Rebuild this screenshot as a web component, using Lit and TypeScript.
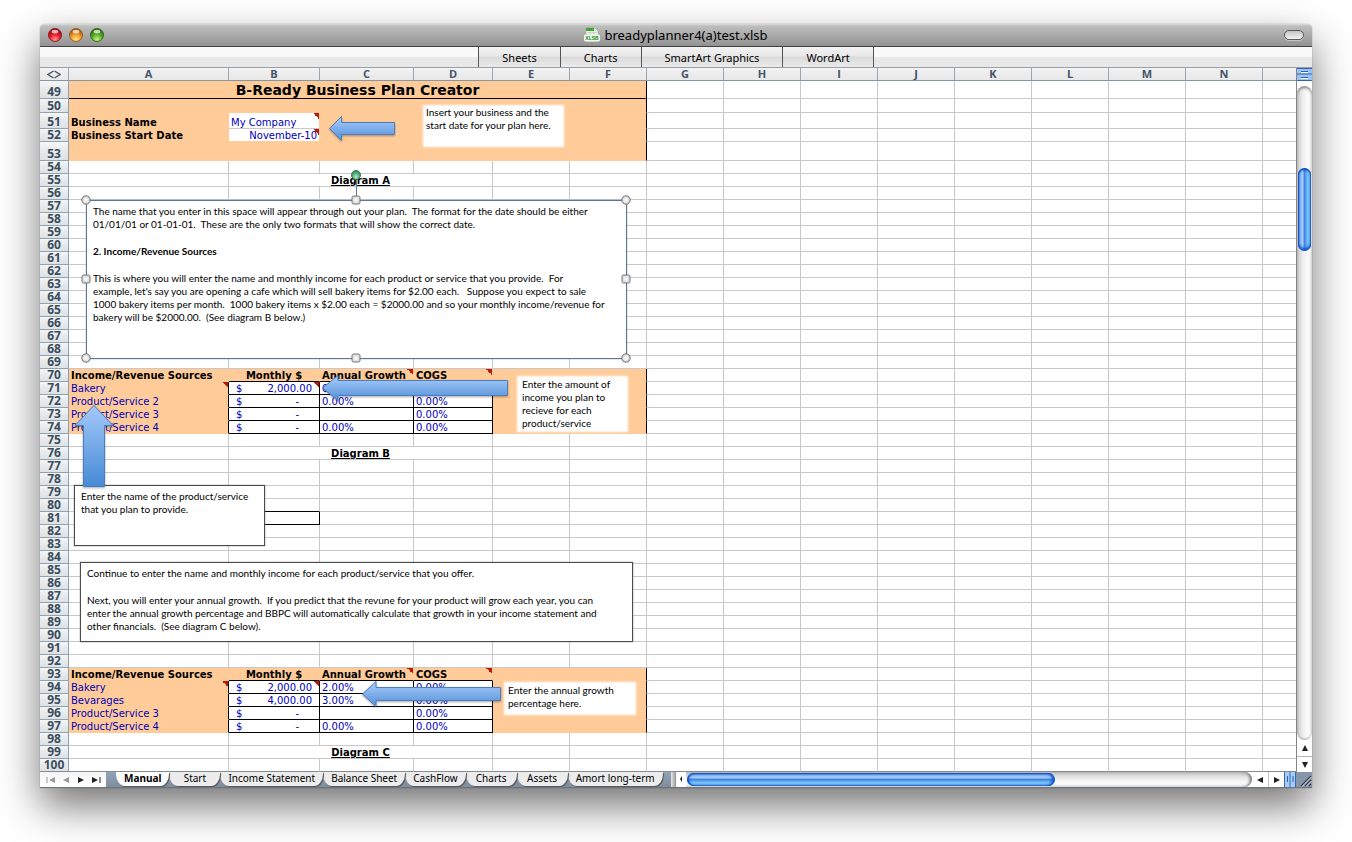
import { LitElement, html, svg, css, nothing } from 'lit';
import { customElement, state } from 'lit/decorators.js';
import { classMap } from 'lit/directives/class-map.js';

type Cell = { text?: string; cls?: string; span?: number; money?: string };

const COLUMNS = ['A', 'B', 'C', 'D', 'E', 'F', 'G', 'H', 'I', 'J', 'K', 'L', 'M', 'N', ''];
const FIRST_ROW = 49;
const LAST_ROW = 100;
const TABS = ['Manual', 'Start', 'Income Statement', 'Balance Sheet', 'CashFlow', 'Charts', 'Assets', 'Amort long-term'];

const CELLS: Record<string, Cell> = {
  A49: { text: 'B-Ready Business Plan Creator', cls: 'title edge', span: 6 },
  A51: { text: 'Business Name', cls: 'bold' },
  B51: { text: 'My Company', cls: 'field blue mark' },
  A52: { text: 'Business Start Date', cls: 'bold' },
  B52: { text: 'November-10', cls: 'field blue mark right' },
  B55: { text: 'Diagram A', cls: 'caption', span: 3 },
  B76: { text: 'Diagram B', cls: 'caption', span: 3 },
  B80: { cls: 'under' },
  B81: { cls: 'under side' },
  B99: { text: 'Diagram C', cls: 'caption', span: 3 },
};

function addSources(top: number, rows: [string, string, string, string][]) {
  CELLS[`A${top}`] = { text: 'Income/Revenue Sources', cls: 'bold' };
  CELLS[`B${top}`] = { text: 'Monthly $', cls: 'bold center under' };
  CELLS[`C${top}`] = { text: 'Annual Growth', cls: 'bold under mark' };
  CELLS[`D${top}`] = { text: 'COGS', cls: 'bold under mark' };
  rows.forEach(([name, money, growth, cogs], i) => {
    const r = top + 1 + i;
    const mark = i === 0 ? ' mark' : '';
    CELLS[`A${r}`] = { text: name, cls: 'blue side' + mark };
    CELLS[`B${r}`] = { money, cls: 'boxed blue' + mark };
    CELLS[`C${r}`] = { text: growth, cls: 'boxed blue' };
    CELLS[`D${r}`] = { text: cogs, cls: 'boxed blue' };
  });
}
addSources(70, [
  ['Bakery', '2,000.00', '0.00%', '0.00%'],
  ['Product/Service 2', '-', '0.00%', '0.00%'],
  ['Product/Service 3', '-', '', '0.00%'],
  ['Product/Service 4', '-', '0.00%', '0.00%'],
]);
addSources(93, [
  ['Bakery', '2,000.00', '2.00%', '0.00%'],
  ['Bevarages', '4,000.00', '3.00%', '0.00%'],
  ['Product/Service 3', '-', '', '0.00%'],
  ['Product/Service 4', '-', '0.00%', '0.00%'],
]);

const isShaded = (row: number) => row <= 53 || (row >= 70 && row <= 74) || (row >= 93 && row <= 97);

@customElement('sheet-grid')
class SheetGrid extends LitElement {
  static styles = css`
    :host { display: block; position: relative; overflow: hidden; background: #fff; }
    table { width: 100%; table-layout: fixed; border-collapse: separate; border-spacing: 0; font: 10px/10px "DejaVu Sans", Verdana, sans-serif; color: #000; }
    .c-head { width: 29px; } .c-A { width: 160px; } .c-B { width: 91px; } .c-C { width: 94px; } .c-D { width: 79px; }
    .c-std { width: 77px; }
    th, td { box-sizing: border-box; height: 13px; padding: 0; vertical-align: bottom; white-space: nowrap; }
    thead th, tbody th { font: bold 11px/12px "Open Sans", sans-serif; color: #44546a; text-align: center; }
    thead th { background: linear-gradient(#f4f4f4, #ececec 50%, #e9e9e9); border-right: 1px solid #98a6b2; border-bottom: 1px solid #8796a3; }
    thead th:last-child { border-right: 0; }
    tbody th { font-size: 12px; color: #3d4d5c; background: linear-gradient(#f4f6f7, #e9ecee 40%, #dde2e6); border-right: 1px solid #8da0ae; border-bottom: 1px solid #92a3b0; }
    td { padding: 0 2px; border-right: 1px solid #c8c8c8; border-bottom: 1px solid #c8c8c8; background-color: #fff; }
    td:last-child { border-right: 0; }
    tbody tr:last-child td, tbody tr:last-child th { border-bottom-color: #858b90; }
    .r49 > * { height: 18px; } .r50 > * { height: 14px; } .r51 > * { height: 16px; } .r53 > * { height: 19px; }
    .shade { background-color: #ffcc99; border-color: #ffcc99; }
    .edge { border-right-color: #000; }
    .title { font: bold 14px/16px "DejaVu Sans", sans-serif; text-align: center; border-bottom-color: #000; }
    .bold { font-weight: bold; }
    .center { text-align: center; }
    .right { text-align: right; }
    .caption { font-weight: bold; text-align: center; text-decoration: underline; text-underline-offset: 1px; }
    .blue { color: #0000b8; }
    .field { background-color: #fff; }
    .r51 .field { border-bottom-color: #c8c8c8; }
    .under { border-bottom-color: #000; }
    .side { border-right-color: #000; }
    .boxed { background-color: #fff; border-color: #000; }
    .mark { background-image: linear-gradient(to bottom left, #c01808 50%, transparent 50%); background-size: 6px 6px; background-position: right top; background-repeat: no-repeat; }
    .money { display: flex; justify-content: space-between; padding: 0 5px; }
    .money .dash { padding-right: 13px; }
    .corner { display: block; margin: 0 auto; }

    .layer { position: absolute; inset: 0; pointer-events: none; }
    .obj { position: absolute; box-sizing: border-box; font: 10px/13px Lato, Calibri, sans-serif; color: #000; }
    .obj p { margin: 0 0 14px; white-space: pre; }
    .note { background: #fff; box-shadow: 0 0 2px 1px #fff; padding: 1px 4px; }
    .box { background: #fff; border: 1px solid #4c4c4c; box-shadow: 0 0 1px #555; padding: 4px 6px; }
    .selected { border-color: #60788f; box-shadow: 0 0 1px #5b83b5; }
    .art { position: absolute; overflow: visible; filter: drop-shadow(0 1px 1px rgba(0, 0, 0, .35)); }
    .handles { position: absolute; overflow: visible; }
    .n1 { left: 384px; top: 38px; width: 139px; height: 40px; padding-left: 2px; padding-top: 0; }
    .n2 { left: 478px; top: 309px; width: 109px; height: 54px; }
    .n3 { left: 465px; top: 615px; width: 130px; height: 31px; padding-left: 3px; padding-top: 1px; }
    .b1 { left: 46px; top: 132px; width: 541px; height: 159px; }
    .b2 { left: 34px; top: 417px; width: 191px; height: 61px; }
    .b3 { left: 40px; top: 494px; width: 553px; height: 80px; }
    .a1 { left: 289px; top: 48px; } .a2 { left: 282px; top: 307px; } .a3 { left: 34px; top: 337px; } .a4 { left: 322px; top: 613px; }
    .h1 { left: 46px; top: 132px; }
  `;

  private cellsFor(row: number) {
    const out = [];
    for (let i = 0; i < COLUMNS.length; ) {
      const cell = CELLS[COLUMNS[i] + row] ?? {};
      const span = cell.span ?? 1;
      const shaded = isShaded(row) && i < 6;
      const cls = `${shaded ? 'shade ' : ''}${shaded && i + span === 6 ? 'edge ' : ''}${cell.cls ?? ''}`;
      out.push(html`<td class=${cls} colspan=${span}>${cell.money
        ? html`<div class="money"><span>$</span><span class=${cell.money === '-' ? 'dash' : ''}>${cell.money}</span></div>`
        : cell.text ?? nothing}</td>`);
      i += span;
    }
    return out;
  }

  private leftArrow(cls: string, w: number, h: number, head: number, inset: number) {
    const id = 'g-' + cls;
    return html`<svg class="art ${cls}" width=${w} height=${h} aria-hidden="true">
      <defs><linearGradient id=${id} x1="0" y1="0" x2="0" y2="1"><stop offset="0.15" stop-color="#9fc4f7"></stop><stop offset="0.9" stop-color="#5a96dc"></stop></linearGradient></defs>
      <path d="M0.5 ${h / 2}L${head} 0.5V${inset}H${w - 0.5}V${h - inset}H${head}V${h - 0.5}Z" fill="url(#${id})" stroke="#4a7ebb"></path>
    </svg>`;
  }

  render() {
    const rows = Array.from({ length: LAST_ROW - FIRST_ROW + 1 }, (_, i) => FIRST_ROW + i);
    const W = 540, H = 158;
    const round = [[0, 0], [W, 0], [0, H], [W, H]];
    const square = [[W / 2, 0], [W / 2, H], [0, H / 2], [W, H / 2]];
    return html`
      <table>
        <colgroup>
          <col class="c-head"><col class="c-A"><col class="c-B"><col class="c-C"><col class="c-D">
          ${Array.from({ length: 10 }, () => html`<col class="c-std">`)}<col>
        </colgroup>
        <thead><tr>
          <th aria-label="Select all"><svg class="corner" width="14" height="12" viewBox="0 0 14 12"><path d="M6.500 3L1 6.500L6.500 10M7.500 3L13 6.500L7.500 10" fill="none" stroke="#44546a" stroke-width="1.300"></path></svg></th>
          ${COLUMNS.map((c) => html`<th scope="col">${c}</th>`)}
        </tr></thead>
        <tbody>${rows.map((r) => html`<tr class="r${r}"><th scope="row">${r}</th>${this.cellsFor(r)}</tr>`)}</tbody>
      </table>
      <div class="layer">
        <div class="obj note n1"><p>Insert your business and the
start date for your plan here.</p></div>
        ${this.leftArrow('a1', 66, 25, 12.5, 6.5)}
        <div class="obj box selected b1"><p>The name that you enter in this space will appear through out your plan.  The format for the date should be either
01/01/01 or 01-01-01.  These are the only two formats that will show the correct date.</p><p><b>2. Income/Revenue Sources</b></p><p>This is where you will enter the name and monthly income for each product or service that you provide.  For
example, let's say you are opening a cafe which will sell bakery items for $2.00 each.   Suppose you expect to sale
1000 bakery items per month.  1000 bakery items x $2.00 each = $2000.00 and so your monthly income/revenue for
bakery will be $2000.00.  (See diagram B below.)</p></div>
        <svg class="handles h1" width="541" height="159" aria-hidden="true">
          <defs>
            <radialGradient id="knob"><stop offset="0" stop-color="#fff"></stop><stop offset="1" stop-color="#d4d4d4"></stop></radialGradient>
            <radialGradient id="spin" cy="0.7"><stop offset="0" stop-color="#b5efc8"></stop><stop offset="1" stop-color="#3f9a68"></stop></radialGradient>
          </defs>
          <path d="M270.500 -21V-4" stroke="#5b7c98" fill="none"></path>
          <circle cx="270" cy="-25" r="4.500" fill="url(#spin)" stroke="#3a7355"></circle>
          ${round.map(([x, y]) => svg`<circle cx=${x} cy=${y} r="4.200" fill="url(#knob)" stroke="#6e6e6e"></circle>`)}
          ${square.map(([x, y]) => svg`<rect x=${x - 4} y=${y - 4} width="8" height="8" rx="1.500" fill="url(#knob)" stroke="#777"></rect>`)}
        </svg>
        <div class="obj note n2"><p>Enter the amount of
income you plan to
recieve for each
product/service</p></div>
        ${this.leftArrow('a2', 186, 26, 16, 5.5)}
        <div class="obj box b2"><p>Enter the name of the product/service
that you plan to provide.</p></div>
        <svg class="art a3" width="40" height="82" aria-hidden="true">
          <defs><linearGradient id="up" x1="0" y1="0" x2="0" y2="1"><stop offset="0" stop-color="#a4c8fa"></stop><stop offset="1" stop-color="#468bd6"></stop></linearGradient></defs>
          <path d="M20 0.500L39 20.500H30.500V81.500H9.500V20.500H1Z" fill="url(#up)" stroke="#4a7ebb"></path>
        </svg>
        <div class="obj box b3"><p>Continue to enter the name and monthly income for each product/service that you offer.</p><p>Next, you will enter your annual growth.  If you predict that the revune for your product will grow each year, you can
enter the annual growth percentage and BBPC will automatically calculate that growth in your income statement and
other financials.  (See diagram C below).</p></div>
        <div class="obj note n3"><p>Enter the annual growth
percentage here.</p></div>
        ${this.leftArrow('a4', 139, 26, 14, 6.5)}
      </div>`;
  }
}

@customElement('app-root')
class AppRoot extends LitElement {
  @state() private active = 'Manual';

  static styles = css`
    :host { display: block; box-sizing: border-box; min-height: 100vh; padding: 24px 40px 54px; background: #fff; font-family: "Noto Sans", "Open Sans", sans-serif; }
    button { font-family: inherit; margin: 0; padding: 0; border: 0; background: none; color: #000; white-space: nowrap; }
    .window { border-radius: 5px 5px 0 0; box-shadow: 0 0 1px rgba(0, 0, 0, .6), 0 18px 40px rgba(0, 0, 0, .55); }
    .titlebar { display: grid; grid-template-columns: 1fr auto 1fr; align-items: center; box-sizing: border-box; height: 23px; padding: 0 8px; border-radius: 5px 5px 0 0; background: linear-gradient(#dcdcdc, #bebebe 2px, #939393); border-bottom: 1px solid #404040; }
    .lights { display: flex; gap: 7px; }
    .light { width: 14px; height: 14px; }
    .light svg { display: block; }
    .name { display: flex; align-items: center; gap: 4px; font-size: 13px; line-height: 20px; font-weight: normal; margin: 0; }
    .pill { justify-self: end; width: 20px; height: 10px; border: 1px solid #5a5a5a; border-radius: 5px; background: linear-gradient(#c4c4c4, #f4f4f4); box-shadow: 0 1px 0 #c8c8c8; }
    .toolbar { display: flex; justify-content: center; box-sizing: border-box; height: 21px; background: linear-gradient(#f9f9f9 10px, #e8e8e8 10px); border-bottom: 1px solid #98a0a6; }
    .toolbar button { padding: 2px 23px 0; font-size: 11px; line-height: 18px; border-right: 1px solid #555; background: linear-gradient(#f2f2f2, #e9e9e9 9px, #dadada 10px, #ebebeb); }
    .toolbar button:first-child { border-left: 1px solid #555; }
    .body { display: grid; grid-template-columns: minmax(0, 1fr) 16px; }
    .vbar { display: flex; flex-direction: column; border-left: 1px solid #858585; background: #fff; }
    .split { display: block; height: 13px; }
    .vtrack { flex: 1; display: flex; flex-direction: column; margin-top: 5px; border-radius: 8px; background: linear-gradient(to right, #c4c4c4, #ececec 35%, #fdfdfd 75%, #e4e4e4); box-shadow: inset 0 3px 3px -1px #888, inset 0 -2px 2px -1px #aaa; }
    .vthumb { margin: 82px 1px 0; height: 83px; border-radius: 7px; background: linear-gradient(to right, #0a47b8, #7fb0f4 15%, #a9ccfa 35%, #3c86e4 50%, #7cc4fb 75%, #6fb8f4 90%, #1c5cc0); box-shadow: inset 0 2px 2px #0a4dc0, inset 0 -3px 3px #1557c4; }
    .arrows { display: grid; grid-template-rows: 16px 16px; }
    .arrows button { display: grid; place-items: center; }
    .arrows button + button { border-top: 1px solid #b5b5b5; }
    .footer { display: flex; box-sizing: border-box; height: 16px; border-bottom: 1px solid #6c747c; background: #8e9db0; }
    .nav { display: flex; align-items: center; justify-content: space-around; width: 66px; padding: 0 3px; box-sizing: border-box; background: linear-gradient(#f4f4f4, #fff); }
    .nav svg, .arrows svg, .hbuttons svg { display: block; }
    .strip { display: flex; width: 565px; padding-left: 10px; box-sizing: border-box; background: linear-gradient(#93a3b8, #7f8d9d); overflow: hidden; }
    .tab { flex: none; min-width: 51px; height: 14px; padding: 0 8px; font-size: 10px; line-height: 10px; padding-bottom: 3px; background: #ececec; border-radius: 0 0 9px 9px / 0 0 12px 12px; box-shadow: 1px 1px 1px #555; position: relative; }
    .tab.active { background: #fff; font-weight: bold; }
    .hsplit { width: 8px; background: linear-gradient(to right, #e8e8e8, #999 60%, #fff 70%); }
    .htrack { flex: 1; border-radius: 0 8px 8px 0; background: linear-gradient(#bdbdbd, #e6e6e6 35%, #fcfcfc 75%, #e4e4e4); box-shadow: inset -3px 0 3px -1px #777; }
    .hwrap { flex: 1; display: flex; background: #fff; }
    .hthumb { width: 65%; height: 13px; margin: 1px 0 0 1px; border-radius: 7px; background: linear-gradient(#0a47b8, #7fb0f4 15%, #a9ccfa 35%, #3c86e4 50%, #7cc4fb 75%, #6fb8f4 90%, #1c5cc0); box-shadow: inset 2px 0 2px #0a4dc0, inset -3px 0 3px #1557c4; }
    .hbuttons { display: grid; grid-template-columns: 16px 16px; }
    .hbuttons button { display: grid; place-items: center; }
    .hbuttons button + button { border-left: 1px solid #c4c4c4; }
    .endcap { display: block; }
  `;

  private light(name: string, dark: string, mid: string, pale: string) {
    return html`<button class="light" aria-label=${name}><svg width="14" height="14" viewBox="0 0 14 14">
      <defs><radialGradient id=${name} cx="0.5" cy="0.85" r="0.8"><stop offset="0" stop-color=${pale}></stop><stop offset="0.5" stop-color=${mid}></stop><stop offset="1" stop-color=${dark}></stop></radialGradient></defs>
      <circle cx="7" cy="7" r="6.500" fill="url(#${name})" stroke=${dark} stroke-width="0.900"></circle>
      <ellipse cx="7" cy="3.600" rx="3.300" ry="1.900" fill="#fff" opacity="0.700"></ellipse>
    </svg></button>`;
  }

  private glyph(d: string, fill = '#222', w = 10) {
    return html`<svg width=${w} height="10" viewBox="0 0 ${w} 10"><path d=${d} fill=${fill}></path></svg>`;
  }

  render() {
    return html`
      <main class="window">
        <header class="titlebar">
          <div class="lights">
            ${this.light('Close', '#8c1016', '#e8202c', '#ff9a9c')}
            ${this.light('Minimize', '#9a5210', '#f09a28', '#ffe98a')}
            ${this.light('Zoom', '#2c6412', '#5cae2c', '#c8f48a')}
          </div>
          <h1 class="name">
            <svg width="16" height="16" viewBox="0 0 16 16" aria-hidden="true">
              <path d="M2 1H11L14 4V8H2Z" fill="#fff" stroke="#9a9a9a" stroke-width="0.600"></path>
              <path d="M2 1H10V4H2Z" fill="#3fa535"></path><path d="M10 1V4.500H14Z" fill="#d8ecd4"></path>
              <path d="M3 5.500H13M3 7H13M6 4V8M9.500 4V8" stroke="#a8c8a8" stroke-width="0.600"></path>
              <rect x="0.500" y="8" width="15" height="6" rx="1" fill="#e9f5e5" stroke="#fff"></rect>
              <text x="8" y="13" text-anchor="middle" font-family="Liberation Sans" font-weight="bold" font-size="5" fill="#16881a">XLSB</text>
            </svg>
            <span>breadyplanner4(a)test.xlsb</span>
          </h1>
          <button class="pill" aria-label="Toggle toolbar"></button>
        </header>
        <nav class="toolbar"><button>Sheets</button><button>Charts</button><button>SmartArt Graphics</button><button>WordArt</button></nav>
        <section class="body">
          <sheet-grid></sheet-grid>
          <div class="vbar">
            <svg class="split" width="15" height="13" viewBox="0 0 15 13" aria-hidden="true"><path d="M0 0H15V13H0Z" fill="#9cc3f2"></path><path d="M0 0.500H15M0 6H15M0 12.500H15" stroke="#2f66ad" stroke-width="1.200"></path><path d="M4 3.500H11M4 9.500H11" stroke="#2f66ad"></path><path d="M4 4.500H11M4 10.500H11" stroke="#fff"></path></svg>
            <div class="vtrack"><div class="vthumb"></div></div>
            <div class="arrows">
              <button aria-label="Scroll up">${this.glyph('M5 2L8 8H2Z')}</button>
              <button aria-label="Scroll down">${this.glyph('M5 8L8 2H2Z')}</button>
            </div>
          </div>
        </section>
        <footer class="footer">
          <div class="nav">
            <button aria-label="First sheet">${this.glyph('M0.500 2H1.500V8H0.500ZM9 2V8L3 5Z', '#999')}</button>
            <button aria-label="Previous sheet">${this.glyph('M8 2V8L2 5Z', '#999')}</button>
            <button aria-label="Next sheet">${this.glyph('M2 2V8L8 5Z')}</button>
            <button aria-label="Last sheet">${this.glyph('M1 2V8L7 5ZM8.500 2H9.500V8H8.500Z')}</button>
          </div>
          <div class="strip">
            ${TABS.map((t, i) => html`<button class=${classMap({ tab: true, active: t === this.active })} style="z-index:${TABS.length - i}" @click=${() => (this.active = t)}>${t}</button>`)}
          </div>
          <div class="hsplit"></div>
          <div class="hwrap">
            <svg width="7" height="14" viewBox="0 0 7 14" aria-hidden="true"><path d="M3 4V10L1 7Z" fill="#222"></path></svg>
            <div class="htrack"><div class="hthumb"></div></div>
            <div class="hbuttons">
              <button aria-label="Scroll left">${this.glyph('M8 2V8L2 5Z')}</button>
              <button aria-label="Scroll right">${this.glyph('M2 2V8L8 5Z')}</button>
            </div>
          </div>
          <svg class="endcap" width="28" height="15" viewBox="0 0 28 15" aria-hidden="true">
            <path d="M0 0H12V15H0Z" fill="#a9cbf5"></path><path d="M0.500 0V15M6 0V15M11.500 0V15" stroke="#2f6cc0"></path><path d="M3.500 4V10M9 4V10" stroke="#2f66ad"></path>
            <path d="M12 0H28V15H12Z" fill="#8795a8"></path><path d="M17 14L27 4M21 14L27 8M25 14L27 12" stroke="#333b46" stroke-width="1.200"></path><path d="M18 14.500L27.500 5M22 14.500L27.500 9" stroke="#e3e8ee" stroke-width="0.800"></path>
          </svg>
        </footer>
      </main>`;
  }
}
